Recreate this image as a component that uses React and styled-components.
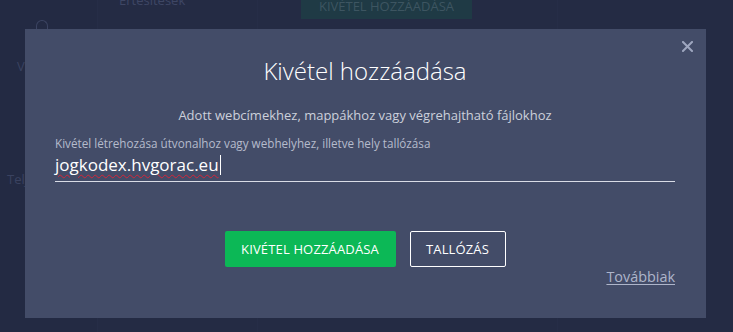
import styled, { createGlobalStyle } from "styled-components";

const GlobalStyle = createGlobalStyle`
  html, body {
    margin: 0;
    padding: 0;
    background: #242b44;
    font-family: "Open Sans", Lato, "Liberation Sans", sans-serif;
  }
  #root {
    width: 733px;
    height: 332px;
    overflow: hidden;
  }
`;

const Page = styled.div`
  position: relative;
  width: 733px;
  height: 332px;
  display: flex;
  background: #242b44;
  overflow: hidden;
`;

const Sidebar = styled.div`
  width: 97px;
  flex-shrink: 0;
  background: #232a43;
  border-right: 1px solid #262d47;
  display: flex;
  flex-direction: column;
  align-items: flex-start;
  color: #3a4260;
  font-size: 13px;
`;

const SideIcon = styled.div`
  margin: 20px 0 0 36px;
  width: 10px;
  height: 10px;
  border: 1px solid #3c4462;
  border-bottom: none;
  border-radius: 6px 6px 0 0;
`;

const SideItem = styled.div`
  margin: ${(p) => p.$top}px 0 0 ${(p) => p.$left}px;
  line-height: 14px;
`;

const Main = styled.div`
  flex: 1;
  display: flex;
  margin-top: -7px;
`;

const Column = styled.div`
  width: ${(p) => p.$w}px;
  flex-shrink: 0;
  box-sizing: border-box;
  padding-left: ${(p) => p.$pad}px;
  border-right: 1px solid #262d47;
  color: #3e4664;
  font-size: 13px;
  line-height: 14px;
`;

const GhostButton = styled.div`
  width: 171px;
  height: 26px;
  background: #1f3a45;
  color: #3d5561;
  font-size: 13px;
  display: flex;
  align-items: center;
  justify-content: center;
`;

const Modal = styled.div`
  position: absolute;
  left: 25px;
  top: 29px;
  width: 681px;
  height: 289px;
  box-sizing: border-box;
  background: #434c68;
  padding: 0 31px 0 30px;
  display: flex;
  flex-direction: column;
`;

const Close = styled.button`
  position: absolute;
  top: 10px;
  right: 12px;
  width: 14px;
  height: 14px;
  padding: 0;
  border: none;
  background: transparent;
  display: flex;
  align-items: center;
  justify-content: center;
`;

const Title = styled.h2`
  margin: 27px 0 0;
  font-size: 24px;
  line-height: 30px;
  font-weight: 300;
  color: #ffffff;
  text-align: center;
`;

const Subtitle = styled.p`
  margin: 20px 0 0;
  font-size: 13px;
  line-height: 18px;
  color: #ccd0db;
  text-align: center;
`;

const Label = styled.div`
  margin-top: 12px;
  font-size: 11.7px;
  line-height: 14px;
  color: #b5bbcc;
`;

const Field = styled.div`
  margin-top: 3px;
  padding-bottom: 4px;
  border-bottom: 1px solid #d9dce6;
  display: flex;
  align-items: center;
  height: 24px;
`;

const Value = styled.span`
  font-size: 17px;
  line-height: 24px;
  color: #ffffff;
  text-decoration: underline wavy #d3263a;
  text-decoration-thickness: 1px;
  text-underline-offset: 3px;
`;

const Caret = styled.span`
  width: 1px;
  height: 20px;
  margin-left: 1px;
  background: #ffffff;
`;

const Actions = styled.div`
  margin-top: 49px;
  display: flex;
  justify-content: center;
  gap: 14px;
`;

const Button = styled.button`
  height: 36px;
  box-sizing: border-box;
  padding: 0;
  width: ${(p) => p.$w}px;
  border-radius: 2px;
  font-family: inherit;
  font-size: 13px;
  letter-spacing: 0.15px;
  color: #ffffff;
  border: ${(p) => (p.$primary ? "none" : "1px solid #ffffff")};
  background: ${(p) => (p.$primary ? "#0cb856" : "transparent")};
`;

const Footer = styled.div`
  margin-top: 1px;
  display: flex;
  justify-content: flex-end;
`;

const Link = styled.a`
  font-size: 14.4px;
  line-height: 18px;
  color: #aeb5ca;
  text-decoration: underline;
  text-underline-offset: 2px;
`;

export default function App() {
  return (
    <>
      <GlobalStyle />
      <Page>
        <Sidebar>
          <SideIcon />
          <SideItem $top={28} $left={17}>V</SideItem>
          <SideItem $top={99} $left={7}>Telj</SideItem>
        </Sidebar>
        <Main>
          <Column $w={160} $pad={21}>Értesítések</Column>
          <Column $w={300} $pad={43}>
            <GhostButton>KIVÉTEL HOZZÁADÁSA</GhostButton>
          </Column>
        </Main>
        <Modal>
          <Close aria-label="Bezárás">
            <svg width="11" height="11" viewBox="0 0 11 11">
              <path
                d="M1 1 L10 10 M10 1 L1 10"
                stroke="#9ea6bf"
                strokeWidth="2"
                strokeLinecap="square"
              />
            </svg>
          </Close>
          <Title>Kivétel hozzáadása</Title>
          <Subtitle>Adott webcímekhez, mappákhoz vagy végrehajtható fájlokhoz</Subtitle>
          <Label>Kivétel létrehozása útvonalhoz vagy webhelyhez, illetve hely tallózása</Label>
          <Field>
            <Value>jogkodex.hvgorac.eu</Value>
            <Caret />
          </Field>
          <Actions>
            <Button $primary $w={171}>KIVÉTEL HOZZÁADÁSA</Button>
            <Button $w={96}>TALLÓZÁS</Button>
          </Actions>
          <Footer>
            <Link>Továbbiak</Link>
          </Footer>
        </Modal>
      </Page>
    </>
  );
}
